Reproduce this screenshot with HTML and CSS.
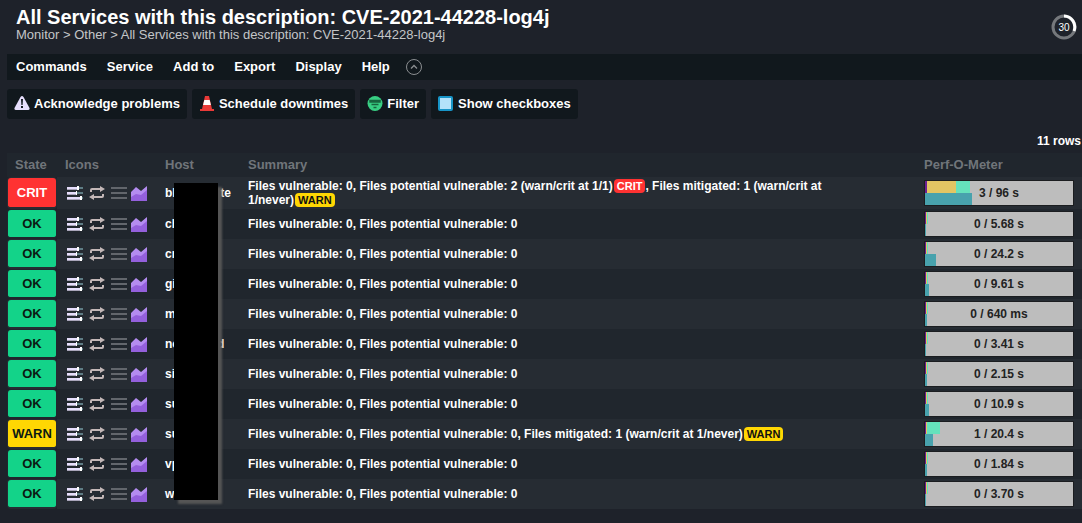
FILE: index.html
```html
<!DOCTYPE html>
<html lang="en">
  <head>
    <title>All Services with this description: CVE-2021-44228-log4j</title>
    <meta charset="utf-8">
    <link rel="stylesheet" href="styles.css">
  </head>
  <body>

  <svg class="sprite" aria-hidden="true">
    <symbol id="params" viewBox="0 0 16 16">
      <path fill="#5f7d85" d="M11 2h5v2h-5zM10 7h6v2h-6zM13 12h3v2h-3z"/>
      <path fill="#e6defc" d="M0 2h11v2H0zM0 7h9v2H0zM0 12h13v2H0z"/>
      <path fill="#a9a5ba" d="M0 4h10v1H0zM0 9h9v1H0zM0 14h13v1H0z"/>
      <path fill="#fff" d="M10 1h2v4h-2zM9 6h1v4H9zM13 11h2v4h-2z"/>
    </symbol>
    <symbol id="reload" viewBox="0 0 16 16">
      <path fill="none" stroke="#c4b8b8" stroke-width="2" d="M2 7V5q0-1 1-1h9M14 9v2q0 1-1 1H4"/>
      <path fill="#c4b8b8" d="M11 1l5 3-5 3zM5 9l-5 3 5 3z"/>
    </symbol>
    <symbol id="menu" viewBox="0 0 16 16">
      <path fill="#62666c" d="M0 2h16v2H0zM0 7h16v2H0zM0 12h16v2H0z"/>
    </symbol>
    <symbol id="graph" viewBox="0 0 16 16">
      <path fill="#b48cf0" d="M0 7l5-5 5 4 6-5v15H0z"/>
      <path fill="#9460dc" d="M0 12l5-3 5 1 6-5v11H0z"/>
    </symbol>
  </svg>

  <header class="top">
    <div>
      <h1>All Services with this description: CVE-2021-44228-log4j</h1>
      <nav class="crumbs"><a href="#">Monitor</a> &gt; <a href="#">Other</a> &gt; <a href="#">All Services with this description: CVE-2021-44228-log4j</a></nav>
    </div>
    <svg class="timer" viewBox="0 0 26 26">
      <circle cx="13" cy="13" r="11" fill="none" stroke="#75787c" stroke-width="3"/>
      <path d="M13 2a11 11 0 0 1 10 15" fill="none" stroke="#fff" stroke-width="3"/>
      <text x="13" y="17" text-anchor="middle">30</text>
    </svg>
  </header>

  <nav class="menubar">
    <button>Commands</button>
    <button>Service</button>
    <button>Add to</button>
    <button>Export</button>
    <button>Display</button>
    <button>Help</button>
    <button class="toggle" aria-label="Hide toolbar">
      <svg width="16" height="16" viewBox="0 0 16 16" fill="none" stroke="#8b8e91"><circle cx="8" cy="8" r="7.5"/><path stroke-width="1.3" d="M5 9.500l3-3 3 3"/></svg>
    </button>
  </nav>

  <div class="shortcuts">
    <button>
      <svg width="16" height="16" viewBox="0 0 16 16"><path fill="#e6defc" d="M6.500 1Q8-1 9.500 1L15.500 12Q16 14 14 14H2Q0 14 .5 12z"/><path fill="#11181d" d="M7 3h2l-.4 6H7.400zM7 10h2v2H7z"/></svg>
      Acknowledge problems
    </button>
    <button>
      <svg width="16" height="16" viewBox="0 0 16 16"><path fill="#e93a38" d="M6 0h4l3 13h2v2H1v-2h2z"/><path fill="#fff" d="M5.300 4h5.400l1.200 5H4.100z"/></svg>
      Schedule downtimes
    </button>
    <button>
      <svg width="16" height="16" viewBox="0 0 16 16"><circle cx="8" cy="7.500" r="7.500" fill="#38cf83"/><path fill="none" stroke="#17643e" stroke-width="1.500" d="M3 4.500h10v1.500H3zM4.500 8.500h7M6.500 11.500h3"/></svg>
      Filter
    </button>
    <button>
      <svg width="16" height="16" viewBox="0 0 16 16"><rect width="15" height="15" rx="2" fill="#1795c8"/><rect x="2" y="2" width="11" height="11" fill="#b3e2fa"/></svg>
      Show checkboxes
    </button>
  </div>

  <div class="count">11 rows</div>

  <div class="services">
    <table>
      <thead>
        <tr>
          <th class="col-state">State</th>
          <th class="col-icons">Icons</th>
          <th class="col-host">Host</th>
          <th>Summary</th>
          <th class="col-perf">Perf-O-Meter</th>
        </tr>
      </thead>
      <tbody>
        <tr>
          <td class="state crit">CRIT</td>
          <td class="icons"><svg><use href="#params"/></svg><svg><use href="#reload"/></svg><svg><use href="#menu"/></svg><svg><use href="#graph"/></svg></td>
          <td>bl<span class="gap"></span>ste</td>
          <td class="summary">Files vulnerable: 0, Files potential vulnerable: 2 (warn/crit at 1/1)<b class="tag crit">CRIT</b>, Files mitigated: 1 (warn/crit at <span class="nowrap">1/never)<b class="tag warn">WARN</b></span></td>
          <td><div class="meter"><div class="bar"><i class="vulnerable" style="width: 2px"></i><i class="potential" style="width: 29px"></i><i class="mitigated" style="width: 14px"></i></div><div class="bar"><i class="time" style="width: 47px"></i></div><span>3 / 96 s</span></div></td>
        </tr>
        <tr>
          <td class="state ok">OK</td>
          <td class="icons"><svg><use href="#params"/></svg><svg><use href="#reload"/></svg><svg><use href="#menu"/></svg><svg><use href="#graph"/></svg></td>
          <td>ch</td>
          <td class="summary">Files vulnerable: 0, Files potential vulnerable: 0</td>
          <td><div class="meter"><div class="bar"><i class="vulnerable"></i><i class="potential"></i><i class="mitigated"></i></div><div class="bar"><i class="time" style="width: 1px"></i></div><span>0 / 5.68 s</span></div></td>
        </tr>
        <tr>
          <td class="state ok">OK</td>
          <td class="icons"><svg><use href="#params"/></svg><svg><use href="#reload"/></svg><svg><use href="#menu"/></svg><svg><use href="#graph"/></svg></td>
          <td>cr</td>
          <td class="summary">Files vulnerable: 0, Files potential vulnerable: 0</td>
          <td><div class="meter"><div class="bar"><i class="vulnerable"></i><i class="potential"></i><i class="mitigated"></i></div><div class="bar"><i class="time" style="width: 11px"></i></div><span>0 / 24.2 s</span></div></td>
        </tr>
        <tr>
          <td class="state ok">OK</td>
          <td class="icons"><svg><use href="#params"/></svg><svg><use href="#reload"/></svg><svg><use href="#menu"/></svg><svg><use href="#graph"/></svg></td>
          <td>gi</td>
          <td class="summary">Files vulnerable: 0, Files potential vulnerable: 0</td>
          <td><div class="meter"><div class="bar"><i class="vulnerable"></i><i class="potential"></i><i class="mitigated"></i></div><div class="bar"><i class="time" style="width: 4px"></i></div><span>0 / 9.61 s</span></div></td>
        </tr>
        <tr>
          <td class="state ok">OK</td>
          <td class="icons"><svg><use href="#params"/></svg><svg><use href="#reload"/></svg><svg><use href="#menu"/></svg><svg><use href="#graph"/></svg></td>
          <td>m</td>
          <td class="summary">Files vulnerable: 0, Files potential vulnerable: 0</td>
          <td><div class="meter"><div class="bar"><i class="vulnerable"></i><i class="potential"></i><i class="mitigated"></i></div><div class="bar"><i class="time" style="width: 2px"></i></div><span>0 / 640 ms</span></div></td>
        </tr>
        <tr>
          <td class="state ok">OK</td>
          <td class="icons"><svg><use href="#params"/></svg><svg><use href="#reload"/></svg><svg><use href="#menu"/></svg><svg><use href="#graph"/></svg></td>
          <td>ne<span class="gap"></span>d</td>
          <td class="summary">Files vulnerable: 0, Files potential vulnerable: 0</td>
          <td><div class="meter"><div class="bar"><i class="vulnerable"></i><i class="potential"></i><i class="mitigated"></i></div><div class="bar"><i class="time" style="width: 1px"></i></div><span>0 / 3.41 s</span></div></td>
        </tr>
        <tr>
          <td class="state ok">OK</td>
          <td class="icons"><svg><use href="#params"/></svg><svg><use href="#reload"/></svg><svg><use href="#menu"/></svg><svg><use href="#graph"/></svg></td>
          <td>si</td>
          <td class="summary">Files vulnerable: 0, Files potential vulnerable: 0</td>
          <td><div class="meter"><div class="bar"><i class="vulnerable"></i><i class="potential"></i><i class="mitigated"></i></div><div class="bar"><i class="time" style="width: 2px"></i></div><span>0 / 2.15 s</span></div></td>
        </tr>
        <tr>
          <td class="state ok">OK</td>
          <td class="icons"><svg><use href="#params"/></svg><svg><use href="#reload"/></svg><svg><use href="#menu"/></svg><svg><use href="#graph"/></svg></td>
          <td>su</td>
          <td class="summary">Files vulnerable: 0, Files potential vulnerable: 0</td>
          <td><div class="meter"><div class="bar"><i class="vulnerable"></i><i class="potential"></i><i class="mitigated"></i></div><div class="bar"><i class="time" style="width: 4px"></i></div><span>0 / 10.9 s</span></div></td>
        </tr>
        <tr>
          <td class="state warn">WARN</td>
          <td class="icons"><svg><use href="#params"/></svg><svg><use href="#reload"/></svg><svg><use href="#menu"/></svg><svg><use href="#graph"/></svg></td>
          <td>su</td>
          <td class="summary">Files vulnerable: 0, Files potential vulnerable: 0, Files mitigated: 1 (warn/crit at <span class="nowrap">1/never)<b class="tag warn">WARN</b></span></td>
          <td><div class="meter"><div class="bar"><i class="vulnerable"></i><i class="potential"></i><i class="mitigated" style="width: 13px"></i></div><div class="bar"><i class="time" style="width: 8px"></i></div><span>1 / 20.4 s</span></div></td>
        </tr>
        <tr>
          <td class="state ok">OK</td>
          <td class="icons"><svg><use href="#params"/></svg><svg><use href="#reload"/></svg><svg><use href="#menu"/></svg><svg><use href="#graph"/></svg></td>
          <td>vp</td>
          <td class="summary">Files vulnerable: 0, Files potential vulnerable: 0</td>
          <td><div class="meter"><div class="bar"><i class="vulnerable"></i><i class="potential"></i><i class="mitigated"></i></div><div class="bar"><i class="time" style="width: 2px"></i></div><span>0 / 1.84 s</span></div></td>
        </tr>
        <tr>
          <td class="state ok">OK</td>
          <td class="icons"><svg><use href="#params"/></svg><svg><use href="#reload"/></svg><svg><use href="#menu"/></svg><svg><use href="#graph"/></svg></td>
          <td>w</td>
          <td class="summary">Files vulnerable: 0, Files potential vulnerable: 0</td>
          <td><div class="meter"><div class="bar"><i class="vulnerable"></i><i class="potential"></i><i class="mitigated"></i></div><div class="bar"><i class="time" style="width: 1px"></i></div><span>0 / 3.70 s</span></div></td>
        </tr>
      </tbody>
    </table>
    <div class="mask"></div>
  </div>

  </body>
</html>
```

FILE: styles.css
```css
* {
  box-sizing: border-box;
}

body {
  margin: 0;
  padding-left: 7px;
  background: #1e222a;
  color: #fff;
  font-family: "Liberation Sans", Arial, sans-serif;
  font-size: 12px;
  line-height: 14px;
}

button {
  padding: 0;
  border: 0;
  background: none;
  color: inherit;
  font: bold 13px/16px "Liberation Sans", Arial, sans-serif;
  cursor: pointer;
}

.sprite {
  display: none;
}

.top {
  display: flex;
  justify-content: space-between;
  align-items: center;
  height: 54px;
  padding: 0 5px 0 9px;
}

h1 {
  margin: 0;
  font-size: 20px;
  line-height: 20px;
}

.crumbs {
  margin-bottom: 5px;
  color: #c4c6c8;
  font-size: 13px;
  line-height: 16px;
}

.crumbs a {
  color: inherit;
  text-decoration: none;
}

.timer {
  width: 26px;
  height: 26px;
}

.timer text {
  fill: #fff;
  font-size: 10px;
}

.menubar {
  display: flex;
  align-items: center;
  gap: 20px;
  height: 26px;
  padding-left: 9px;
  background: #11181d;
}

.toggle,
.toggle svg {
  display: block;
}

.toggle {
  margin-left: -4px;
}

.shortcuts {
  display: flex;
  gap: 5px;
  padding: 9px 0;
}

.shortcuts button {
  display: flex;
  align-items: center;
  gap: 4px;
  height: 30px;
  padding: 0 7px;
  border-radius: 3px;
  background: #11181d;
}

.count {
  padding: 6px 1px 5px;
  font-weight: bold;
  text-align: right;
}

.services {
  position: relative;
}

table {
  width: 100%;
  border-spacing: 0;
  table-layout: fixed;
}

th {
  height: 24px;
  padding: 0 8px;
  background: #20262d;
  color: #70757a;
  font-size: 13px;
  text-align: left;
}

tr {
  background: #20262d;
}

tbody tr:nth-child(odd) {
  background: #262c33;
}

td {
  height: 30px;
  padding: 0 8px;
  font-weight: bold;
}

.col-state { width: 50px; }
.col-icons { width: 100px; }
.col-host { width: 83px; }
.col-perf { width: 166px; }

td.state {
  padding: 0;
  border: solid transparent;
  border-width: 1px 1px 2px;
  border-radius: 4px;
  background-clip: padding-box;
  color: #0b1a14;
  font-size: 13px;
  text-align: center;
}

.ok { background-color: #13d389; }
.warn { background-color: #ffd703; }
td.crit, .crit { background-color: #ff3232; color: #fff; }
td.state.crit { color: #fff; }

.icons {
  font-size: 0;
}

.icons svg {
  width: 16px;
  height: 16px;
  margin: 0 6px 0 2px;
  vertical-align: middle;
}

.icons svg + svg {
  margin-left: 0;
}

.icons svg:nth-child(3) {
  margin-right: 4px;
}

.icons svg:last-child {
  margin-right: 0;
}

.gap {
  display: inline-block;
  width: 38px;
}

td.summary {
  padding: 2px 8px;
}

.nowrap {
  white-space: nowrap;
}

.tag {
  display: inline-block;
  height: 14px;
  margin-left: 1px;
  padding: 0 3px;
  border-radius: 4px;
  font-size: 11px;
  vertical-align: top;
}

.tag.warn {
  color: #111;
}

.meter {
  position: relative;
  height: 26px;
  border: 1px solid #1b1d20;
  background: #bdbdbd;
}

.bar {
  display: flex;
  height: 12px;
}

.bar i { width: 1px; }
.vulnerable { background: #6c1f92; }
.potential { background: #e2c563; }
.mitigated { background: #65e2bc; }
.time { background: #48a2ad; }

/* value sits on top of the bars */
.meter span {
  position: absolute;
  inset: 0;
  color: #222;
  line-height: 24px;
  text-align: center;
}

.mask {
  position: absolute;
  top: 30px;
  bottom: 9px;
  left: 167px;
  width: 44px;
  background: #000;
  box-shadow: 4px 4px 2px #555;
}
```
